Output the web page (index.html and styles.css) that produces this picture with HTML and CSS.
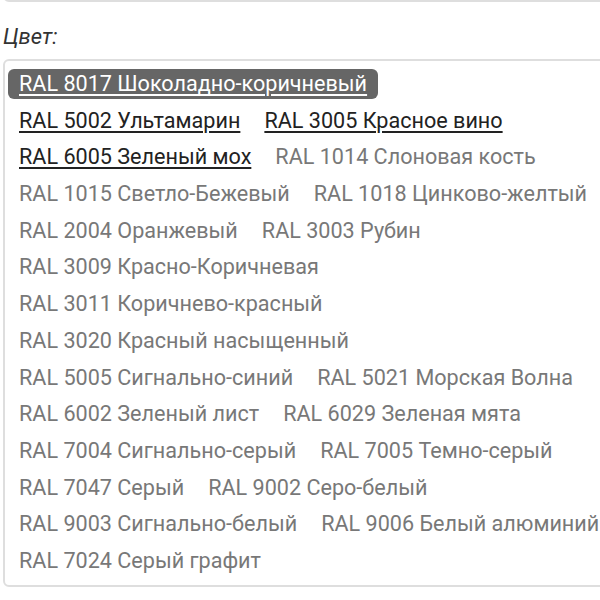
FILE: index.html
```html
<!DOCTYPE html>
<html lang="ru">
<head>
    <meta charset="UTF-8">
    <meta name="viewport" content="width=device-width, initial-scale=1.0">
    <title>Цвет</title>
    <link rel="stylesheet" href="styles.css">
</head>
<body>
    <div class="page">
        <!-- previous field, only its bottom edge is in view -->
        <div class="prev-field"></div>

        <div class="field">
            <div class="field-label">Цвет:</div>
            <div class="options">
                <a href="#" class="option selected">RAL 8017 Шоколадно-коричневый</a>
                <a href="#" class="option active">RAL 5002 Ультамарин</a>
                <a href="#" class="option active">RAL 3005 Красное вино</a>
                <a href="#" class="option active">RAL 6005 Зеленый мох</a>
                <a href="#" class="option">RAL 1014 Слоновая кость</a>
                <a href="#" class="option">RAL 1015 Светло-Бежевый</a>
                <a href="#" class="option">RAL 1018 Цинково-желтый</a>
                <a href="#" class="option">RAL 2004 Оранжевый</a>
                <a href="#" class="option">RAL 3003 Рубин</a>
                <a href="#" class="option">RAL 3009 Красно-Коричневая</a>
                <a href="#" class="option">RAL 3011 Коричнево-красный</a>
                <a href="#" class="option">RAL 3020 Красный насыщенный</a>
                <a href="#" class="option">RAL 5005 Сигнально-синий</a>
                <a href="#" class="option">RAL 5021 Морская Волна</a>
                <a href="#" class="option">RAL 6002 Зеленый лист</a>
                <a href="#" class="option">RAL 6029 Зеленая мята</a>
                <a href="#" class="option">RAL 7004 Сигнально-серый</a>
                <a href="#" class="option">RAL 7005 Темно-серый</a>
                <a href="#" class="option">RAL 7047 Серый</a>
                <a href="#" class="option">RAL 9002 Серо-белый</a>
                <a href="#" class="option">RAL 9003 Сигнально-белый</a>
                <a href="#" class="option">RAL 9006 Белый алюминий</a>
                <a href="#" class="option">RAL 7024 Серый графит</a>
            </div>
        </div>
    </div>
</body>
</html>
```

FILE: styles.css
```css
body {
    margin: 0;
    font-family: Roboto, 'Noto Sans', sans-serif;
    background-color: #fff;
    overflow: hidden;
}

.page {
    width: 620px;
    padding-left: 3px;
}

.prev-field {
    height: 25px;
    margin-top: -27px;
    border: 2px solid #dedede;
    border-radius: 6px;
}

.field-label {
    font-size: 22px;
    font-style: italic;
    color: #333;
    margin-top: 22px;
    line-height: 26px;
}

.options {
    display: flex;
    flex-wrap: wrap;
    column-gap: 2px;
    row-gap: 6.7px;
    margin-top: 9px;
    padding: 8px 3px 9px;
    border: 2px solid #dedede;
    border-radius: 6px;
}

.option {
    font-size: 21.6px;
    line-height: 30px;
    padding: 0 11px;
    color: #787878;
    text-decoration: none;
    border-radius: 6px;
}

.option.active {
    color: #222;
    text-decoration: underline;
    text-underline-offset: 3px;
}

.option.selected {
    background-color: #666;
    color: #fff;
    text-decoration: underline;
    text-underline-offset: 3px;
}
```
